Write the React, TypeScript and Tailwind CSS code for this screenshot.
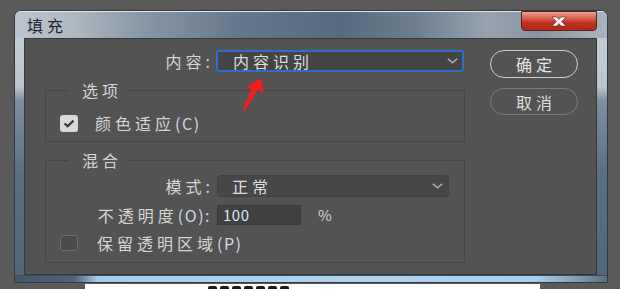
import React from "react";

function Chevron({ className }: { className?: string }) {
  return (
    <svg width="11" height="6" viewBox="0 0 11 6" className={className}>
      <polyline points="0.8,0.8 5.5,4.8 10.2,0.8" fill="none" stroke="#b4b4b4" strokeWidth="1.4" />
    </svg>
  );
}

export default function App() {
  return (
    <div className="relative w-[620px] h-[289px] overflow-hidden bg-[#5a5a5a] font-['Noto_Sans_CJK_SC','Noto_Sans',sans-serif]">
      <div className="pt-[10px] pl-[14px]">
        <div className="w-[594px] h-[273px] flex flex-col rounded-t-[7px] border border-[#2f3a45] bg-[linear-gradient(180deg,#c9d0d6_0%,#bcc5cd_28%,#7d90a2_33%,#5b6f83_60%,#52667a_100%)] overflow-hidden">
          {/* title bar */}
          <div className="h-[27px] flex items-center justify-between border-t border-[#e4e9ee] bg-[linear-gradient(90deg,#bcc5cd_0%,#aeb8c2_10%,#8696a5_22%,#65778a_38%,#586b7e_55%,#6d7f90_68%,#97a4b0_80%,#8795a2_88%,#a9b4be_100%)]">
            <span className="pl-[12px] text-[16px] leading-[20px] tracking-[4px] text-[#1d2834]">填充</span>
            <div className="self-start -mt-[1px] mr-[10px] w-[76px] h-[20px] flex items-center justify-center rounded-b-[4px] border border-[#5e2018] bg-[linear-gradient(180deg,#e9a195_0%,#d9604f_35%,#c0301f_60%,#b1281a_100%)]">
              <svg width="18" height="11" viewBox="0 0 18 11">
                <path d="M2 1 L7 1 L9 3.5 L11 1 L16 1 L11.5 5.5 L16 10 L11 10 L9 7.5 L7 10 L2 10 L6.5 5.5 Z" fill="#ffffff" stroke="#6a2a22" strokeWidth="0.6" />
              </svg>
            </div>
          </div>
          {/* middle */}
          <div className="flex-1 pl-[9px] pr-[10px] flex">
            <div className="flex-1 bg-[#535353] border border-[#383838] flex pl-[20px] pt-[11px]">
              {/* left column */}
              <div className="w-[420px] flex flex-col text-[#d6d6d6] text-[16px] tracking-[4px]">
                <div className="h-[22px] flex items-center">
                  <span className="w-[166px] text-right leading-[20px]">内容<span className="tracking-[1px]">:</span></span>
                  <div className="ml-[5px] w-[248px] h-[22px] flex items-center justify-between rounded-[3px] border-2 border-[#2d6cc8] bg-[#444444] pl-[15px] pr-[4px]">
                    <span className="leading-[18px] text-[#dedede]">内容识别</span>
                    <Chevron />
                  </div>
                </div>
                <fieldset className="mt-[8px] border border-[#454545] pl-[14px] pt-[14px] pb-[9px]">
                  <legend className="ml-[8px] pl-[14px] pr-[6px] leading-[20px]">选项</legend>
                  <div className="h-[18px] flex items-center">
                    <div className="w-[18px] h-[17px] rounded-[3px] bg-[#d9d9d9] flex items-center justify-center">
                      <svg width="12" height="9" viewBox="0 0 12 9">
                        <polyline points="1.5,4.5 4.6,7.2 10.5,1.6" fill="none" stroke="#3a3a3a" strokeWidth="2.2" />
                      </svg>
                    </div>
                    <span className="ml-[17px] leading-[20px]">颜色适应<span className="tracking-[1.5px] text-[#d2dae4]">(C)</span></span>
                  </div>
                </fieldset>
                <fieldset className="mt-[8px] border border-[#454545] pt-[5px] pb-[10px]">
                  <legend className="ml-[22px] pl-[14px] pr-[6px] leading-[20px]">混合</legend>
                  <div className="h-[22px] flex items-center">
                    <span className="w-[165px] text-right leading-[20px]">模式<span className="tracking-[1px]">:</span></span>
                    <div className="ml-[6px] w-[232px] h-[22px] flex items-center justify-between rounded-[4px] border border-[#404040] bg-[#474747] pl-[14px] pr-[5px]">
                      <span className="leading-[18px] text-[#dedede]">正常</span>
                      <Chevron />
                    </div>
                  </div>
                  <div className="mt-[8px] h-[20px] flex items-center">
                    <span className="w-[165px] text-right leading-[20px]">不透明度<span className="tracking-[1.5px] text-[#d2dae4]">(O):</span></span>
                    <div className="ml-[6px] w-[84px] h-[20px] flex items-center border border-[#393939] bg-[#414141] pl-[5px]">
                      <span className="text-[15px] tracking-[0.5px] leading-[18px] text-[#dbe6f2]">100</span>
                    </div>
                    <span className="ml-[17px] text-[15px] leading-[18px] text-[#c9d4df]">%</span>
                  </div>
                  <div className="mt-[9px] h-[18px] flex items-center pl-[14px]">
                    <div className="w-[18px] h-[16px] rounded-[3px] bg-[#4a4a4a] border border-[#6e6e6e]" />
                    <span className="ml-[19px] leading-[20px]">保留透明区域<span className="tracking-[1.5px] text-[#d2dae4]">(P)</span></span>
                  </div>
                </fieldset>
              </div>
              {/* right column */}
              <div className="ml-[25px] flex flex-col">
                <button className="w-[88px] h-[28px] rounded-full border-[1.5px] border-[#cfcfcf] text-[16px] tracking-[4px] pl-[4px] leading-[20px] text-[#e6e6e6]">确定</button>
                <button className="mt-[10px] w-[88px] h-[27px] rounded-full border border-[#7c7c7c] text-[16px] tracking-[4px] pl-[4px] leading-[20px] text-[#dcdcdc]">取消</button>
              </div>
            </div>
          </div>
          {/* bottom frame */}
          <div className="h-[7px] border-t border-[#3a4a58] bg-[linear-gradient(90deg,#44566a_0%,#4f6276_10%,#a6cdec_14%,#b0d4f0_60%,#a9cfee_88%,#7c93a8_96%,#5a6e82_100%)]" />
        </div>
      </div>
      {/* white strip below */}
      <div className="mt-[1px] ml-[85px] w-[455px] h-[5px] bg-white flex items-end pl-[123px] gap-[3px]">
        <div className="w-[9px] h-[3px] rounded-t-[2px] bg-[#1a1a1a]" />
        <div className="w-[9px] h-[3px] rounded-t-[2px] bg-[#1a1a1a]" />
        <div className="w-[9px] h-[3px] rounded-t-[2px] bg-[#1a1a1a]" />
        <div className="w-[9px] h-[3px] rounded-t-[2px] bg-[#1a1a1a]" />
        <div className="w-[9px] h-[3px] rounded-t-[2px] bg-[#1a1a1a]" />
        <div className="w-[9px] h-[3px] rounded-t-[2px] bg-[#1a1a1a]" />
        <div className="w-[9px] h-[3px] rounded-t-[2px] bg-[#1a1a1a]" />
      </div>
      {/* red annotation arrow */}
      <svg className="absolute left-0 top-0 pointer-events-none" width="620" height="289" viewBox="0 0 620 289">
        <polygon points="261,78 264,93 257.5,90 245,111 242.5,110 252,88 246,87" fill="#f41d1d" />
      </svg>
    </div>
  );
}
